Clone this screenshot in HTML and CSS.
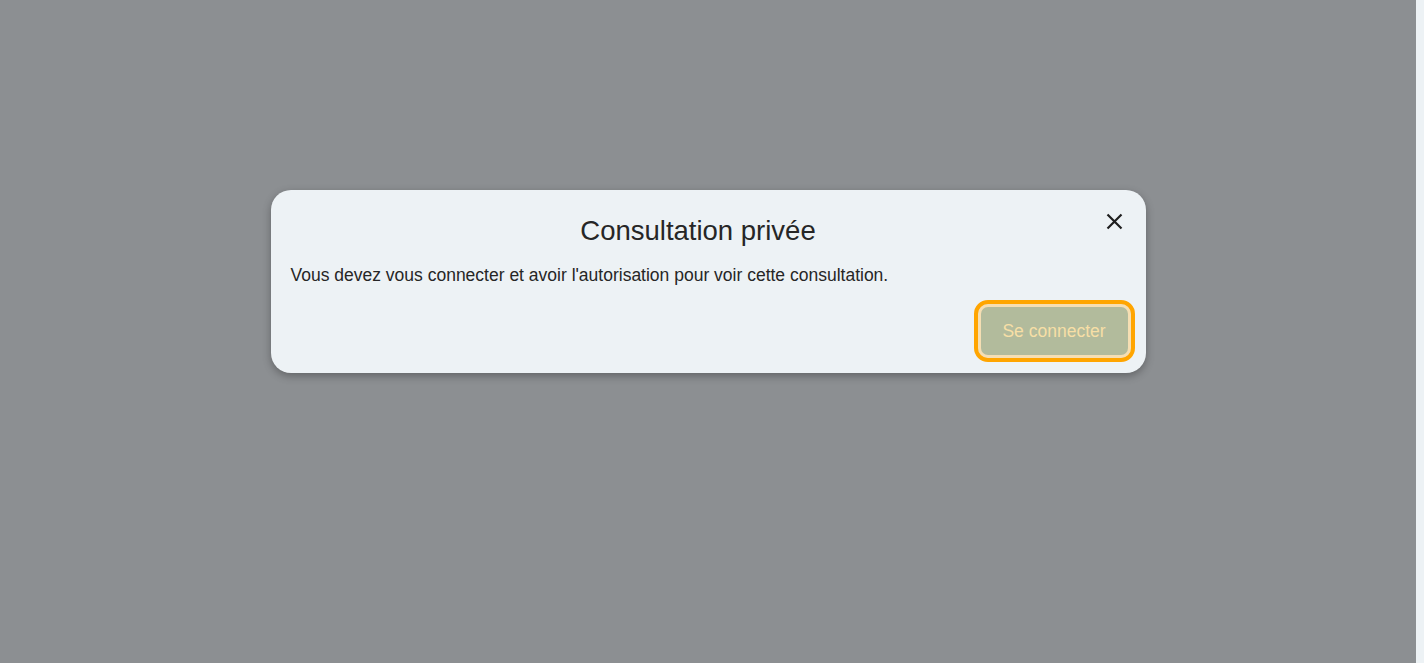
FILE: index.html
```html
<!DOCTYPE html>
<html lang="fr">
<head>
<meta charset="utf-8">
<title>Consultation privée</title>
<link rel="stylesheet" href="styles.css">
</head>
<body>
<div class="backdrop">
  <div class="modal" role="dialog" aria-labelledby="modal-title">
    <div class="header">
      <h2 class="title" id="modal-title">Consultation privée</h2>
      <button class="close" aria-label="Fermer">
        <svg width="17" height="17" viewBox="0 0 17 17"><path d="M1.5 1.5 L15.5 15.5 M15.5 1.5 L1.5 15.5" stroke="#1f1f1f" stroke-width="2.2" fill="none"/></svg>
      </button>
    </div>
    <p class="text">Vous devez vous connecter et avoir l'autorisation pour voir cette consultation.</p>
    <div class="footer">
      <button class="btn">Se connecter</button>
    </div>
  </div>
</div>
</body>
</html>
```

FILE: styles.css
```css
html, body {
  margin: 0;
  padding: 0;
  height: 100%;
}
body {
  background: #edf2f5;
  font-family: "Liberation Sans", Arial, sans-serif;
  color: #222;
}
.backdrop {
  position: fixed;
  top: 0;
  left: 0;
  bottom: 0;
  right: 8px;
  background: #8c8f92;
  display: flex;
  justify-content: center;
  align-items: flex-start;
  padding-top: 190px;
  box-sizing: border-box;
}
.modal {
  width: 875px;
  box-sizing: border-box;
  background: #edf2f5;
  border-radius: 20px;
  box-shadow: 0 3px 8px rgba(0, 0, 0, 0.3);
  padding: 25px 15px 15px 20px;
}
.header {
  display: flex;
  align-items: flex-start;
  padding-right: 6px;
}
.title {
  flex: 1;
  margin: 0;
  text-align: center;
  font-size: 27.5px;
  font-weight: normal;
  color: #262626;
  line-height: 31px;
  padding-left: 1px;
}
.close {
  flex: none;
  width: 20px;
  height: 20px;
  margin-top: -4px;
  padding: 0;
  border: 0;
  background: transparent;
  display: flex;
  align-items: center;
  justify-content: center;
  cursor: pointer;
}
.text {
  margin: 19px 0 0 0;
  font-size: 17.5px;
  line-height: 20px;
  color: #262626;
}
.footer {
  display: flex;
  justify-content: flex-end;
  margin-top: 19px;
}
.btn {
  font-family: "Liberation Sans", Arial, sans-serif;
  font-size: 17.5px;
  line-height: 20px;
  color: #f7dfa6;
  background: #b2bb9c;
  border: 3px solid #f5deb3;
  border-radius: 10px;
  outline: 4px solid #ffa500;
  padding: 14px 10px;
  width: 153px;
  height: 54px;
  box-sizing: border-box;
  cursor: pointer;
}
```
